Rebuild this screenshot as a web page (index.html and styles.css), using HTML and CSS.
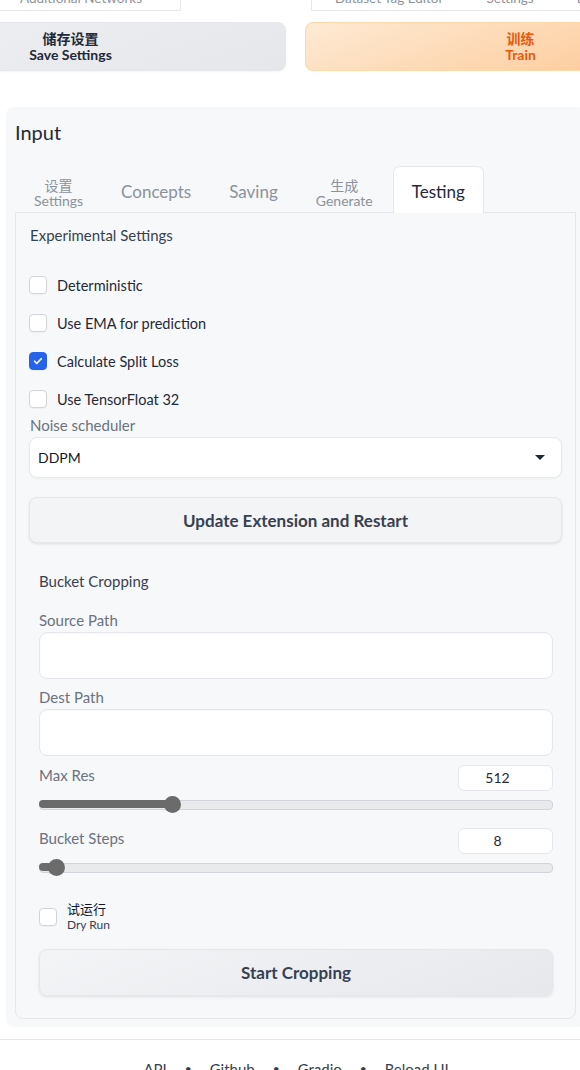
FILE: index.html
```html
<!DOCTYPE html>
<html lang="zh">
<head>
<meta charset="utf-8">
<title>Testing</title>
<link rel="stylesheet" href="styles.css">
</head>
<body>
<div class="page">
  <div class="toptabs">
    <div class="tbox tbox-left"><span class="ttext">Additional Networks</span></div>
    <div class="tbox tbox-right">
      <span class="ttext">Dataset Tag Editor</span>
      <span class="ttext">Settings</span>
      <span class="ttext">Extensions</span>
    </div>
  </div>

  <div class="actions">
    <button class="bigbtn btn-save"><span class="zh">储存设置</span><span class="en">Save Settings</span></button>
    <button class="bigbtn btn-train"><span class="zh">训练</span><span class="en">Train</span></button>
  </div>

  <div class="panel">
    <h2 class="panel-title">Input</h2>
    <div class="tabs">
      <div class="tab dual"><span class="zh">设置</span><span class="en">Settings</span></div>
      <div class="tab">Concepts</div>
      <div class="tab">Saving</div>
      <div class="tab dual"><span class="zh">生成</span><span class="en">Generate</span></div>
      <div class="tab selected">Testing</div>
    </div>
    <div class="tabbody">
      <div class="section-title">Experimental Settings</div>
      <div class="checks">
        <label class="check"><span class="box"></span><span>Deterministic</span></label>
        <label class="check"><span class="box"></span><span>Use EMA for prediction</span></label>
        <label class="check"><span class="box checked"><svg viewBox="0 0 16 16" width="12" height="12"><path d="M3.5 8.3l2.9 2.9 6-6.2" fill="none" stroke="#fff" stroke-width="2.2" stroke-linecap="round" stroke-linejoin="round"/></svg></span><span>Calculate Split Loss</span></label>
        <label class="check"><span class="box"></span><span>Use TensorFloat 32</span></label>
      </div>
      <div class="field-label">Noise scheduler</div>
      <div class="select"><span>DDPM</span><svg viewBox="0 0 10 5" width="10" height="5"><path d="M0 0h10L5 5z" fill="#1f2937"/></svg></div>
      <button class="wide-btn update-btn">Update Extension and Restart</button>

      <div class="group">
        <div class="section-title group-title">Bucket Cropping</div>
        <div class="field-label mt19">Source Path</div>
        <div class="textbox"></div>
        <div class="field-label mt8">Dest Path</div>
        <div class="textbox"></div>

        <div class="num-row mt9"><span class="field-label">Max Res</span><span class="num">512</span></div>
        <div class="slider"><div class="fill" style="width:133px"></div><div class="thumb"></div></div>

        <div class="num-row mt16"><span class="field-label">Bucket Steps</span><span class="num">8</span></div>
        <div class="slider"><div class="fill" style="width:17px"></div><div class="thumb"></div></div>

        <label class="dry">
          <span class="box"></span>
          <span class="dry-text"><span class="zh">试运行</span><span class="en">Dry Run</span></span>
        </label>
        <button class="wide-btn crop-btn">Start Cropping</button>
      </div>
    </div>
  </div>

  <footer class="footer">
    <a>API</a><span class="dot">•</span><a>Github</a><span class="dot">•</span><a>Gradio</a><span class="dot">•</span><a>Reload UI</a>
  </footer>
</div>
</body>
</html>
```

FILE: styles.css
```css
* { box-sizing: border-box; }
html, body { margin: 0; padding: 0; background: #fff; }
body {
  overflow: hidden;
  font-family: Lato, "Noto Sans CJK SC", sans-serif;
  color: #1f2937;
}
.page { width: 580px; height: 1070px; overflow: hidden; }

/* top tab strip (cut off) */
.toptabs { display: flex; height: 11px; }
.tbox {
  height: 11px;
  border-bottom: 1px solid #e5e7eb;
  display: flex;
  white-space: nowrap;
  overflow: visible;
}
.tbox-left { flex: none; width: 181px; border-right: 1px solid #e5e7eb; padding-left: 20px; }
.tbox-right { flex: none; width: 300px; margin-left: 130px; border-left: 1px solid #e5e7eb; padding-left: 23px; gap: 43px; }
.ttext {
  display: block;
  margin-top: -10px;
  font-size: 13.5px;
  line-height: 16px;
  color: #8b929c;
}

/* action buttons */
.actions { display: flex; gap: 19px; margin-top: 11px; margin-left: -145px; }
.bigbtn {
  flex: none;
  width: 431px;
  height: 49px;
  border-radius: 8px;
  display: flex;
  flex-direction: column;
  align-items: center;
  justify-content: center;
  font-family: inherit;
  font-weight: 700;
  padding: 0;
}
.bigbtn .zh { font-size: 14px; line-height: 16px; }
.bigbtn .en { font-size: 14px; line-height: 16px; }
.btn-save {
  background: linear-gradient(160deg, #eeeff2, #e6e7eb);
  border: 1px solid #e5e7eb;
  color: #1f2937;
  box-shadow: 0 1px 2px rgba(0,0,0,0.05);
}
.btn-train {
  background: linear-gradient(160deg, #feead4, #fdc48e);
  border: 1px solid #fed7aa;
  color: #ea580c;
}

/* panel */
.panel {
  margin-top: 36px;
  margin-left: 6px;
  width: 580px;
  background: #f7f8fa;
  border-radius: 8px;
  padding: 11px 9px 8px;
}
.panel-title {
  margin: 0;
  font-size: 20px;
  line-height: 28px;
  font-weight: 400;
  color: #1f2937;
}
.tabs { display: flex; gap: 2px; margin-top: 20px; height: 46px; padding-left: 1px; }
.tab {
  padding: 3px 17px 0;
  display: flex;
  align-items: center;
  font-size: 17px;
  color: #8b929c;
  white-space: nowrap;
  border: 1px solid transparent;
  border-bottom: none;
}
.tab.dual { flex-direction: column; justify-content: center; padding-top: 7px; }
.tab.dual .zh { font-size: 14px; line-height: 15px; }
.tab.dual .en { font-size: 14px; line-height: 15px; }
.tab.selected {
  background: #fff;
  border-color: #e5e7eb;
  border-radius: 7px 7px 0 0;
  color: #1f2937;
  height: 47px;
  padding: 3px 18px 0;
  position: relative;
  z-index: 1;
}
.tabbody {
  width: 561px;
  border: 1px solid #e5e7eb;
  border-radius: 0 0 8px 8px;
  background: #f7f8fa;
  padding: 12px 13px 22px;
}
.section-title { font-size: 15px; line-height: 20px; color: #374151; padding-left: 1px; }

.checks { display: flex; flex-direction: column; gap: 14px; margin-top: 28px; }
.check { display: flex; align-items: center; gap: 10px; height: 24px; font-size: 14.5px; color: #1f2937; }
.box {
  width: 18px; height: 18px;
  border: 1px solid #d1d5db;
  border-radius: 4px;
  background: #fff;
  display: flex; align-items: center; justify-content: center;
  flex: none;
  box-shadow: 0 1px 1px rgba(0,0,0,0.04);
}
.box.checked { background: #2563eb; border-color: #2563eb; }

.field-label { font-size: 15px; line-height: 20px; color: #6b7280; padding-left: 1px; }
.checks + .field-label { margin-top: 4px; }
.select {
  margin-top: 2px;
  height: 41px;
  background: #fff;
  border: 1px solid #e5e7eb;
  border-radius: 8px;
  display: flex;
  align-items: center;
  justify-content: space-between;
  padding: 0 16px 0 8px;
  font-size: 14px;
  color: #111827;
  box-shadow: 0 1px 2px rgba(0,0,0,0.03);
}
.wide-btn {
  display: block;
  width: 100%;
  font-family: inherit;
  font-weight: 700;
  font-size: 17px;
  color: #374151;
  border: 1px solid #e5e7eb;
  border-radius: 8px;
  box-shadow: 0 1px 3px rgba(0,0,0,0.1);
}
.update-btn { margin-top: 19px; height: 46px; background: #f3f4f6; }
.crop-btn { margin-top: 17px; height: 47px; background: linear-gradient(160deg, #f3f4f6, #e7e8ec); }

.group { padding: 0 9px 0 10px; }
.group .field-label, .group .section-title { padding-left: 0; }
.group-title { margin-top: 28px; }
.mt19 { margin-top: 19px; }
.mt8 { margin-top: 8px; }
.mt9 { margin-top: 9px; }
.mt16 { margin-top: 16px; }
.textbox {
  margin-top: 2px;
  height: 47px;
  background: #fff;
  border: 1px solid #e5e7eb;
  border-radius: 8px;
  box-shadow: inset 0 1px 2px rgba(0,0,0,0.03);
}
.num-row { display: flex; justify-content: space-between; align-items: flex-start; height: 26px; }
.num {
  width: 95px; height: 26px;
  background: #fff;
  border: 1px solid #e5e7eb;
  border-radius: 6px;
  font-size: 14px;
  line-height: 24px;
  text-align: center;
  padding-right: 16px;
  color: #1f2937;
}
.slider {
  margin-top: 5px;
  height: 16px;
  display: flex;
  align-items: center;
  position: relative;
}
.slider::before {
  content: "";
  position: absolute;
  left: 0; right: 0; top: 4px;
  height: 8px;
  background: #e9eaec;
  border: 1px solid #d1d5db;
  border-radius: 4px;
}
.fill { height: 8px; background: #6b6b6b; border-radius: 4px 0 0 4px; position: relative; }
.thumb { width: 17px; height: 17px; border-radius: 50%; background: #6b6b6b; margin-left: -8px; position: relative; }

.dry { display: flex; align-items: center; gap: 10px; margin-top: 27px; height: 30px; }
.dry-text { display: flex; flex-direction: column; }
.dry-text .zh { font-size: 13px; line-height: 15px; color: #111827; }
.dry-text .en { font-size: 12px; line-height: 15px; color: #374151; }

.footer {
  margin-top: 12px;
  border-top: 1px solid #e5e7eb;
  padding-top: 19px;
  padding-left: 12px;
  display: flex;
  justify-content: center;
  gap: 18px;
  font-size: 15px;
  line-height: 20px;
  color: #374151;
}
.footer .dot { font-size: 12px; }
```
